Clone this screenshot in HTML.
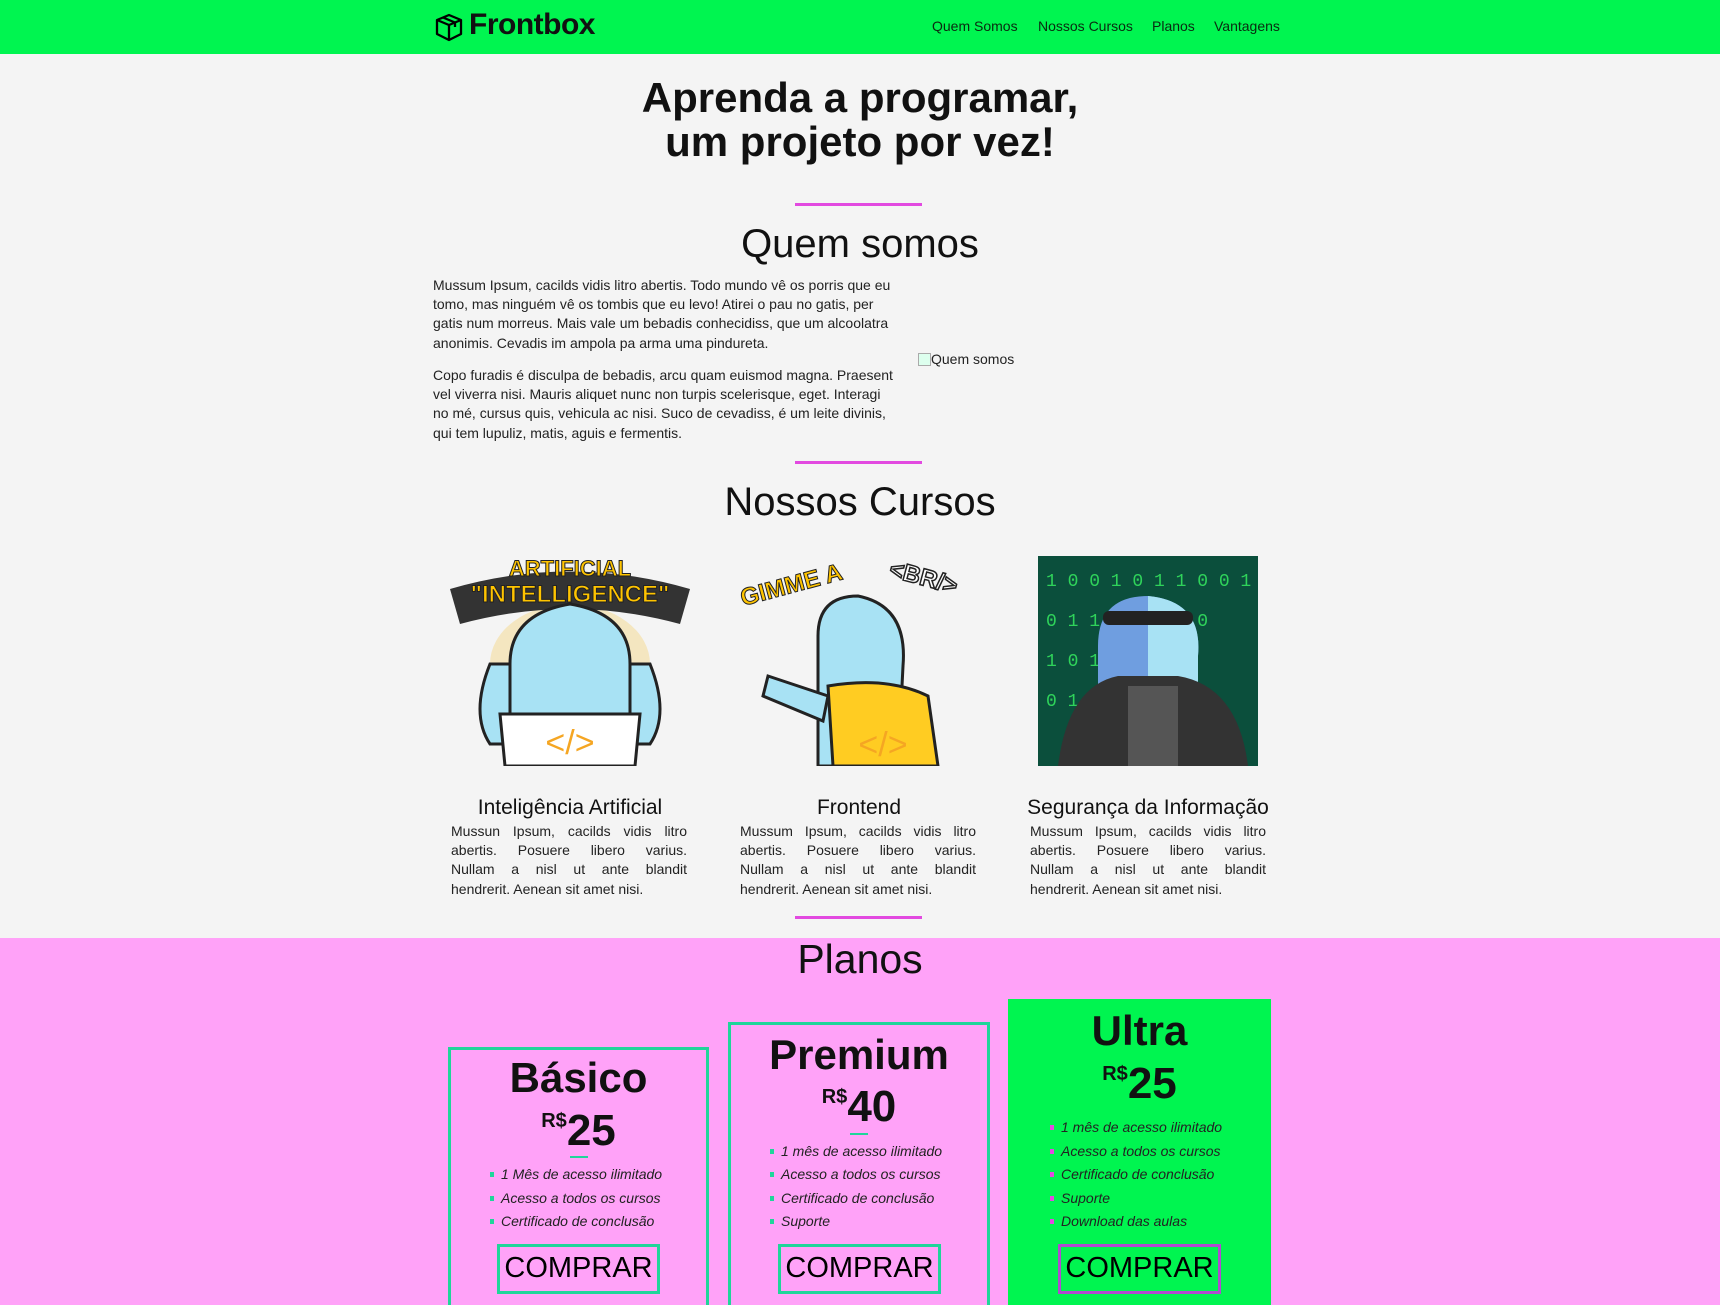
<!DOCTYPE html>
<html style="background:#ffa2f8;height:1305px;overflow:hidden"><head><meta charset="utf-8"><style>
*{margin:0;padding:0;box-sizing:border-box}
body{width:1720px;height:1305px;overflow:hidden;background:#f4f4f4;font-family:"Liberation Sans",sans-serif;color:#111;position:relative}
.a{position:absolute}
.c{position:absolute;text-align:center;white-space:nowrap}
nav{position:absolute;left:0;top:0;width:1720px;height:54px;background:#00f550}
.nl{position:absolute;top:18px;font-size:14px;color:#0a2a10}
.line{position:absolute;left:795px;width:127px;height:3px;background:#e24ae0}
.p{position:absolute;font-size:14px;line-height:19.2px;color:#222;white-space:nowrap}
.j{position:absolute;font-size:14px;line-height:19.2px;color:#222;width:236px}
.j div{text-align:justify;text-align-last:justify;height:19.2px}
.j div:last-child{text-align-last:left}
.card{position:absolute;border:3px solid #1fd59a;border-bottom:none}
.li{position:absolute;font-size:14px;font-style:italic;color:#222;white-space:nowrap}
.li::before{content:"";display:inline-block;width:4px;height:5px;background:#1fd59a;margin-right:7px;vertical-align:2px}
.btn{position:absolute;border:3px solid #1fd59a;font-size:29px;text-align:center;line-height:42px;color:#000}
</style></head><body>
<nav>
<svg class="a" style="left:434px;top:12px" width="30" height="30" viewBox="0 0 30 30" fill="none" stroke="#000" stroke-width="2.3" stroke-linejoin="round"><path d="M15 3 L27 8 L27 22 L15 28 L3 22 L3 8 Z"/><path d="M3 8 L15 13 L27 8"/><path d="M15 13 L15 28"/><path d="M9 5.5 L21 10.5 L21 15"/></svg>
<div class="a" style="left:469px;top:8px;font-size:30px;font-weight:bold;letter-spacing:-0.5px">Frontbox</div>
<div class="nl" style="left:932px">Quem Somos</div>
<div class="nl" style="left:1038px">Nossos Cursos</div>
<div class="nl" style="left:1152px">Planos</div>
<div class="nl" style="left:1214px">Vantagens</div>
</nav>
<div class="c" style="left:0;width:1720px;top:76px;font-size:42px;font-weight:bold;line-height:44px">Aprenda a programar,<br>um projeto por vez!</div>
<div class="line" style="top:203px"></div>
<div class="c" style="left:0;width:1720px;top:222px;font-size:40px">Quem somos</div>
<div class="p" style="left:433px;top:276px">Mussum Ipsum, cacilds vidis litro abertis. Todo mundo vê os porris que eu<br>tomo, mas ninguém vê os tombis que eu levo! Atirei o pau no gatis, per<br>gatis num morreus. Mais vale um bebadis conhecidiss, que um alcoolatra<br>anonimis. Cevadis im ampola pa arma uma pindureta.</div>
<div class="p" style="left:433px;top:366px">Copo furadis é disculpa de bebadis, arcu quam euismod magna. Praesent<br>vel viverra nisi. Mauris aliquet nunc non turpis scelerisque, eget. Interagi<br>no mé, cursus quis, vehicula ac nisi. Suco de cevadiss, é um leite divinis,<br>qui tem lupuliz, matis, aguis e fermentis.</div>
<div class="p" style="left:918px;top:350px"><span style="display:inline-block;width:13px;height:13px;border:1px solid #aaa;vertical-align:-2px;background:#dfe"></span>Quem somos</div>
<div class="line" style="top:461px"></div>
<div class="c" style="left:0;width:1720px;top:480px;font-size:40px">Nossos Cursos</div>

<svg class="a" style="left:450px;top:554px" width="240" height="212" viewBox="0 0 240 212">
<ellipse cx="120" cy="110" rx="80" ry="60" fill="#f4e6c0"/>
<path d="M0 35 Q120 0 240 35 L230 70 Q120 40 10 70Z" fill="#333"/>
<path d="M40 110 Q20 160 40 190 L70 190 L70 110Z M200 110 Q220 160 200 190 L170 190 L170 110Z" fill="#a8e2f4" stroke="#222" stroke-width="3"/>
<path d="M60 110 Q60 60 120 50 Q180 60 180 110 L180 170 L60 170Z" fill="#a8e2f4" stroke="#222" stroke-width="3"/>
<path d="M50 160 L190 160 L185 212 L55 212Z" fill="#fff" stroke="#222" stroke-width="3"/>
<text x="120" y="200" font-size="34" fill="#f5a623" text-anchor="middle" font-family="Liberation Sans">&lt;/&gt;</text>
<text x="120" y="22" font-size="22" font-weight="bold" fill="#ffc400" stroke="#222" stroke-width="1" text-anchor="middle" font-family="Liberation Sans">ARTIFICIAL</text>
<text x="120" y="48" font-size="24" font-weight="bold" fill="#ffc400" stroke="#222" stroke-width="1" text-anchor="middle" font-family="Liberation Sans">"INTELLIGENCE"</text>
</svg>
<svg class="a" style="left:738px;top:556px" width="242" height="210" viewBox="0 0 242 210">
<path d="M80 80 Q80 40 120 40 Q170 50 165 110 L160 210 L80 210Z" fill="#a8e2f4" stroke="#222" stroke-width="3"/>
<path d="M90 130 Q150 120 190 140 L200 210 L95 210Z" fill="#ffcc22" stroke="#222" stroke-width="3"/>
<path d="M30 120 L90 140 L85 165 L25 140Z" fill="#a8e2f4" stroke="#222" stroke-width="3"/>
<text x="145" y="200" font-size="34" fill="#f5a623" text-anchor="middle" font-family="Liberation Sans">&lt;/&gt;</text>
<text x="5" y="50" font-size="24" font-weight="bold" fill="#ffc400" stroke="#222" stroke-width="1" transform="rotate(-15 5 50)" font-family="Liberation Sans">GIMME A</text>
<text x="150" y="20" font-size="24" font-weight="bold" fill="#fff" stroke="#222" stroke-width="1.5" transform="rotate(15 150 20)" font-family="Liberation Sans">&lt;BR/&gt;</text>
</svg>
<svg class="a" style="left:1038px;top:556px" width="226" height="210" viewBox="0 0 226 210">
<rect x="0" y="0" width="220" height="210" fill="#0b4f3c"/>
<text x="8" y="30" font-size="18" fill="#2fd35a" font-family="Liberation Mono">1 0 0 1 0 1 1 0 0 1</text>
<text x="8" y="70" font-size="18" fill="#2fd35a" font-family="Liberation Mono">0 1 1   0   1 0 1 0</text>
<text x="8" y="110" font-size="18" fill="#2fd35a" font-family="Liberation Mono">1 0         1 0 0 1</text>
<text x="8" y="150" font-size="18" fill="#2fd35a" font-family="Liberation Mono">0 1         0 1 1 0</text>
<path d="M60 90 Q60 40 110 40 Q165 45 160 100 L160 150 L60 150Z" fill="#6f9ee0"/>
<path d="M110 40 Q165 45 160 100 L160 150 L110 150Z" fill="#a8e2f4"/>
<rect x="65" y="55" width="90" height="14" fill="#222" rx="6"/>
<path d="M20 210 Q30 130 80 120 L140 120 Q200 130 210 210Z" fill="#333"/>
<rect x="90" y="130" width="50" height="80" fill="#555"/>
</svg>

<div class="c" style="left:450px;width:240px;top:796px;font-size:21px">Inteligência Artificial</div>
<div class="c" style="left:738px;width:242px;top:796px;font-size:21px">Frontend</div>
<div class="c" style="left:1018px;width:260px;top:796px;font-size:21px">Segurança da Informação</div>
<div class="j" style="left:451px;top:822px"><div>Mussun Ipsum, cacilds vidis litro</div><div>abertis. Posuere libero varius.</div><div>Nullam a nisl ut ante blandit</div><div>hendrerit. Aenean sit amet nisi.</div></div>
<div class="j" style="left:740px;top:822px"><div>Mussum Ipsum, cacilds vidis litro</div><div>abertis. Posuere libero varius.</div><div>Nullam a nisl ut ante blandit</div><div>hendrerit. Aenean sit amet nisi.</div></div>
<div class="j" style="left:1030px;top:822px"><div>Mussum Ipsum, cacilds vidis litro</div><div>abertis. Posuere libero varius.</div><div>Nullam a nisl ut ante blandit</div><div>hendrerit. Aenean sit amet nisi.</div></div>
<div class="line" style="top:916px"></div>

<div class="a" style="left:0;top:938px;width:1720px;height:367px;background:#ffa2f8"></div>
<div class="c" style="left:0;width:1720px;top:936px;font-size:41px">Planos</div>

<div class="card" style="left:448px;top:1047px;width:261px;height:258px"></div>
<div class="c" style="left:448px;width:261px;top:1054px;font-size:42px;font-weight:bold">Básico</div>
<div class="c" style="left:448px;width:261px;top:1106px;font-size:44px;font-weight:bold"><span style="font-size:20px;vertical-align:18px">R$</span>25</div>
<div class="a" style="left:570px;top:1156px;width:18px;height:2px;background:#1fd59a"></div>
<div class="li" style="left:490px;top:1166px">1 Mês de acesso ilimitado</div>
<div class="li" style="left:490px;top:1190px">Acesso a todos os cursos</div>
<div class="li" style="left:490px;top:1213px">Certificado de conclusão</div>
<div class="btn" style="left:497px;top:1244px;width:163px;height:50px">COMPRAR</div>

<div class="card" style="left:728px;top:1022px;width:262px;height:283px"></div>
<div class="c" style="left:728px;width:262px;top:1031px;font-size:42px;font-weight:bold">Premium</div>
<div class="c" style="left:728px;width:262px;top:1082px;font-size:44px;font-weight:bold"><span style="font-size:20px;vertical-align:18px">R$</span>40</div>
<div class="a" style="left:850px;top:1133px;width:18px;height:2px;background:#1fd59a"></div>
<div class="li" style="left:770px;top:1143px">1 mês de acesso ilimitado</div>
<div class="li" style="left:770px;top:1166px">Acesso a todos os cursos</div>
<div class="li" style="left:770px;top:1190px">Certificado de conclusão</div>
<div class="li" style="left:770px;top:1213px">Suporte</div>
<div class="btn" style="left:778px;top:1244px;width:163px;height:50px">COMPRAR</div>

<div class="a" style="left:1008px;top:999px;width:263px;height:306px;background:#00f550"></div>
<div class="c" style="left:1008px;width:263px;top:1007px;font-size:42px;font-weight:bold">Ultra</div>
<div class="c" style="left:1008px;width:263px;top:1059px;font-size:44px;font-weight:bold"><span style="font-size:20px;vertical-align:18px">R$</span>25</div>
<div class="li" style="left:1050px;top:1119px">1 mês de acesso ilimitado</div>
<div class="li" style="left:1050px;top:1143px">Acesso a todos os cursos</div>
<div class="li" style="left:1050px;top:1166px">Certificado de conclusão</div>
<div class="li" style="left:1050px;top:1190px">Suporte</div>
<div class="li" style="left:1050px;top:1213px">Download das aulas</div>
<style>.li[style*="1050px"]::before{background:#e24ae0}</style>
<div class="btn" style="left:1058px;top:1244px;width:163px;height:50px;border-color:#b04ad0">COMPRAR</div>
</body></html>
